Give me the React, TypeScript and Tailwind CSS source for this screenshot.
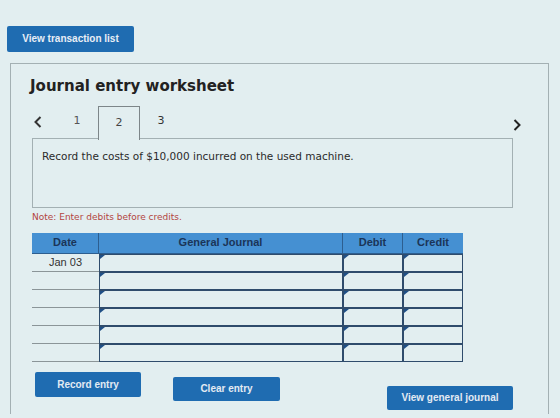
import React from "react";

const verdana = { fontFamily: '"DejaVu Sans", Verdana, sans-serif' };
const arial = { fontFamily: '"Liberation Sans", Arial, sans-serif' };

function Marker() {
  return (
    <svg
      className="absolute left-0 top-0"
      width="5"
      height="5"
      viewBox="0 0 5 5"
    >
      <polygon points="0,0 5,0 0,4" fill="#1f4f86" />
    </svg>
  );
}

function InputCell({ className = "" }: { className?: string }) {
  return (
    <div
      className={`relative h-[18px] border border-[#2f4c6c] ${className}`}
    >
      <Marker />
    </div>
  );
}

function ChevronLeft() {
  return (
    <svg width="8" height="12" viewBox="0 0 8 12">
      <polyline
        points="6.5,1 1.5,6 6.5,11"
        fill="none"
        stroke="#333"
        strokeWidth="2"
      />
    </svg>
  );
}

function ChevronRight() {
  return (
    <svg width="8" height="12" viewBox="0 0 8 12">
      <polyline
        points="1.5,1 6.5,6 1.5,11"
        fill="none"
        stroke="#222"
        strokeWidth="2"
      />
    </svg>
  );
}

export default function App() {
  const rows = [0, 1, 2, 3, 4, 5];
  return (
    <div className="w-[560px] h-[418px] overflow-hidden bg-[#e2eef0] pt-[24px] pl-[7px]">
      <button
        style={arial}
        className="w-[127px] h-[26px] rounded-[2px] bg-[#1f6cb1] text-[10px] font-bold text-[#e8eef6]"
      >
        View transaction list
      </button>

      <div className="mt-[11px] ml-[3px] w-[539px] h-[351px] border border-b-0 border-[#a3b0b3] pt-[13px]">
        <h1
          style={verdana}
          className="ml-[19px] text-[15px] leading-[18px] font-bold text-[#222]"
        >
          Journal entry worksheet
        </h1>

        <div className="ml-[21px] mt-[11px] w-[489px] h-[32px] flex items-center">
          <div className="ml-[2px] w-[8px] flex items-center">
            <ChevronLeft />
          </div>
          <div
            style={verdana}
            className="ml-[14px] w-[42px] text-center text-[11px] text-[#555]"
          >
            1
          </div>
          <div
            style={verdana}
            className="relative z-10 self-stretch -mb-[2px] w-[42px] flex items-center justify-center border border-b-0 border-[#7d8689] bg-[#e2eef0] text-[11px] text-[#444]"
          >
            2
          </div>
          <div
            style={verdana}
            className="w-[42px] text-center text-[11px] text-[#333]"
          >
            3
          </div>
          <div className="ml-auto flex items-center pt-[6px]">
            <ChevronRight />
          </div>
        </div>

        <div className="ml-[21px] w-[481px] h-[70px] border border-[#a3b0b3] pl-[9px] pt-[11px]">
          <p style={verdana} className="text-[10.5px] leading-[13px] text-[#2a2a2a]">
            Record the costs of $10,000 incurred on the used machine.
          </p>
        </div>

        <p
          style={verdana}
          className="ml-[21px] mt-[3px] text-[9px] leading-[12px] text-[#b3453f]"
        >
          Note: Enter debits before credits.
        </p>

        <div
          style={arial}
          className="ml-[21px] mt-[10px] w-[431px] grid grid-cols-[67px_244px_60px_60px]"
        >
          <div className="h-[21px] flex items-center justify-center bg-[#4590d2] border-r border-b border-[#2d5e8f] text-[11px] font-bold text-[#1b3558]">
            Date
          </div>
          <div className="h-[21px] flex items-center justify-center bg-[#4590d2] border-r border-b border-[#2d5e8f] text-[11px] font-bold text-[#1b3558]">
            General Journal
          </div>
          <div className="h-[21px] flex items-center justify-center bg-[#4590d2] border-r border-b border-[#2d5e8f] text-[11px] font-bold text-[#1b3558]">
            Debit
          </div>
          <div className="h-[21px] flex items-center justify-center bg-[#4590d2] border-b border-[#2d5e8f] text-[11px] font-bold text-[#1b3558]">
            Credit
          </div>

          {rows.map((r) => (
            <React.Fragment key={r}>
              <div className="h-[18px] flex items-center justify-center border-b border-[#8b9598] text-[11px] text-[#333]">
                {r === 0 ? "Jan 03" : ""}
              </div>
              <InputCell />
              <InputCell />
              <InputCell />
            </React.Fragment>
          ))}
        </div>

        <div style={arial} className="ml-[24px] flex items-start">
          <button className="mt-[10px] w-[106px] h-[25px] rounded-[2px] bg-[#1f6cb1] text-[10px] font-bold text-[#e3eaf3]">
            Record entry
          </button>
          <button className="ml-[32px] mt-[15px] w-[107px] h-[24px] rounded-[2px] bg-[#1f6cb1] text-[10px] font-bold text-[#e3eaf3]">
            Clear entry
          </button>
          <button className="ml-[107px] mt-[24px] w-[126px] h-[24px] rounded-[2px] bg-[#1f6cb1] text-[10px] font-bold text-[#e3eaf3]">
            View general journal
          </button>
        </div>
      </div>
    </div>
  );
}
